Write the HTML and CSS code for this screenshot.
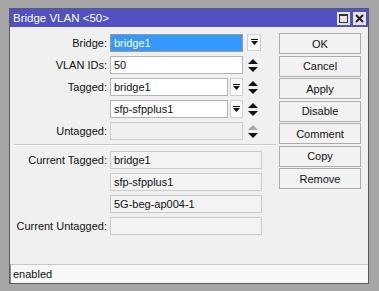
FILE: index.html
```html
<!DOCTYPE html>
<html lang="en">
<head>
    <meta charset="UTF-8">
    <title>Bridge VLAN &lt;50&gt;</title>
    <link rel="stylesheet" href="styles.css">
</head>
<body>
    <div class="win">
        <div class="titlebar">
            <span class="title">Bridge VLAN &lt;50&gt;</span>
            <div class="tbtns">
                <span class="tbtn"><span class="max-icon"></span></span>
                <span class="tbtn">
                    <svg width="9" height="9" viewBox="0 0 9 9"><path d="M1 1 L8 8 M8 1 L1 8" stroke="#222" stroke-width="2"/></svg>
                </span>
            </div>
        </div>
        <div class="content">
            <div class="form">
                <div class="row">
                    <label>Bridge:</label>
                    <div class="ctl">
                        <div class="main"><div class="field selected">bridge1</div></div>
                        <div class="side"><span class="drop wide"><svg width="7" height="7" viewBox="0 0 7 7"><path d="M0 0.5 H7" stroke="#111"/><path d="M0 2 H7 L3.5 6 Z" fill="#111"/></svg></span></div>
                    </div>
                </div>
                <div class="row">
                    <label>VLAN IDs:</label>
                    <div class="ctl">
                        <div class="main"><div class="field">50</div></div>
                        <div class="side"><span class="updown"><svg width="10" height="13" viewBox="0 0 10 13"><path d="M5 0 L10 5 H0 Z" fill="#111"/><path d="M0 8 H10 L5 13 Z" fill="#111"/></svg></span></div>
                    </div>
                </div>
                <div class="row">
                    <label>Tagged:</label>
                    <div class="ctl">
                        <div class="main">
                            <div class="field">bridge1</div>
                            <span class="drop"><svg width="7" height="7" viewBox="0 0 7 7"><path d="M0 0.5 H7" stroke="#111"/><path d="M0 2 H7 L3.5 6 Z" fill="#111"/></svg></span>
                        </div>
                        <div class="side"><span class="updown"><svg width="10" height="13" viewBox="0 0 10 13"><path d="M5 0 L10 5 H0 Z" fill="#111"/><path d="M0 8 H10 L5 13 Z" fill="#111"/></svg></span></div>
                    </div>
                </div>
                <div class="row">
                    <label></label>
                    <div class="ctl">
                        <div class="main">
                            <div class="field">sfp-sfpplus1</div>
                            <span class="drop"><svg width="7" height="7" viewBox="0 0 7 7"><path d="M0 0.5 H7" stroke="#111"/><path d="M0 2 H7 L3.5 6 Z" fill="#111"/></svg></span>
                        </div>
                        <div class="side"><span class="updown"><svg width="10" height="13" viewBox="0 0 10 13"><path d="M5 0 L10 5 H0 Z" fill="#111"/><path d="M0 8 H10 L5 13 Z" fill="#111"/></svg></span></div>
                    </div>
                </div>
                <div class="row">
                    <label>Untagged:</label>
                    <div class="ctl">
                        <div class="main"><div class="field disabled"></div></div>
                        <div class="side"><span class="updown"><svg width="10" height="13" viewBox="0 0 10 13"><path d="M5 0 L10 5 H0 Z" fill="#a8a8a8"/><path d="M0 8 H10 L5 13 Z" fill="#111"/></svg></span></div>
                    </div>
                </div>
                <div class="separator"></div>
                <div class="row">
                    <label>Current Tagged:</label>
                    <div class="ctl"><div class="field readonly">bridge1</div></div>
                </div>
                <div class="row">
                    <label></label>
                    <div class="ctl"><div class="field readonly">sfp-sfpplus1</div></div>
                </div>
                <div class="row">
                    <label></label>
                    <div class="ctl"><div class="field readonly">5G-beg-ap004-1</div></div>
                </div>
                <div class="row">
                    <label>Current Untagged:</label>
                    <div class="ctl"><div class="field readonly"></div></div>
                </div>
            </div>
            <div class="buttons">
                <button class="default">OK</button>
                <button>Cancel</button>
                <button>Apply</button>
                <button>Disable</button>
                <button>Comment</button>
                <button>Copy</button>
                <button>Remove</button>
            </div>
        </div>
        <div class="status">enabled</div>
    </div>
</body>
</html>
```

FILE: styles.css
```css
/* Базовые настройки */
body {
    margin: 0;
    padding: 8px 0 0 9px;
    background-color: #a6a6a6;
    font-family: "Liberation Sans", Arial, sans-serif;
    font-size: 11px;
    color: #111;
}

.win {
    box-sizing: border-box;
    width: 360px;
    height: 276px;
    border: 1px solid #5c5c5c;
    background: #f0f0f0;
    display: flex;
    flex-direction: column;
}

.titlebar {
    height: 18px;
    background: #5151c5;
    display: flex;
    align-items: center;
    justify-content: space-between;
    padding: 0 2px 0 2px;
}

.title {
    color: #fff;
    font-size: 11.5px;
    padding-left: 1px;
}

.tbtns {
    display: flex;
    gap: 3px;
}

.tbtn {
    width: 13px;
    height: 13px;
    background: #e4e4e4;
    display: flex;
    align-items: center;
    justify-content: center;
}

.max-icon {
    box-sizing: border-box;
    width: 9px;
    height: 9px;
    border: 1px solid #333;
    border-top-width: 2px;
}

.content {
    flex: 1;
    display: flex;
    padding: 6px 6px 0 0;
}

.form {
    width: 269px;
    flex-shrink: 0;
    padding-top: 1px;
}

.row {
    display: flex;
    height: 18px;
    margin-bottom: 4px;
}

.row label {
    width: 97px;
    margin-right: 3px;
    text-align: right;
    line-height: 18px;
}

.ctl {
    width: 152px;
    display: flex;
}

.main {
    width: 133px;
    display: flex;
}

.side {
    width: 19px;
    display: flex;
    align-items: center;
}

.field {
    flex: 1;
    box-sizing: border-box;
    height: 18px;
    border: 1px solid #b4b4b4;
    background: #fff;
    padding-left: 3px;
    line-height: 16px;
    white-space: nowrap;
    overflow: hidden;
}

.field.selected {
    background: #3399ff;
    color: #fff;
    border-color: #9a9a9a;
}

.field.disabled {
    background: #f0f0f0;
    border-color: #cfcfcf;
}

.field.readonly {
    background: #f3f3f3;
    border-color: #cbcbcb;
}

.drop {
    box-sizing: border-box;
    width: 13px;
    height: 18px;
    margin-left: 2px;
    border: 1px solid #d0d0d0;
    background: #fafafa;
    display: flex;
    align-items: center;
    justify-content: center;
}

.drop.wide {
    width: 14px;
    height: 17px;
    margin-left: 4px;
    align-self: flex-start;
}

.updown {
    margin-left: 5px;
    display: flex;
}

.separator {
    height: 1px;
    margin: 2px 3px 5px 4px;
    background: #c8c8c8;
    border-bottom: 1px solid #fff;
}

.buttons {
    width: 82px;
    flex-shrink: 0;
    display: flex;
    flex-direction: column;
    gap: 1.5px;
}

.buttons button {
    height: 21px;
    padding: 0;
    border: 1px solid #adadad;
    background: #f2f2f2;
    font-family: "Liberation Sans", Arial, sans-serif;
    font-size: 11px;
    color: #111;
}

.status {
    height: 18px;
    border-top: 1px solid #c6c6c6;
    border-left: 1px solid #8c8c8c;
    background: #f7f7f7;
    padding-left: 2px;
    line-height: 18px;
}
```
